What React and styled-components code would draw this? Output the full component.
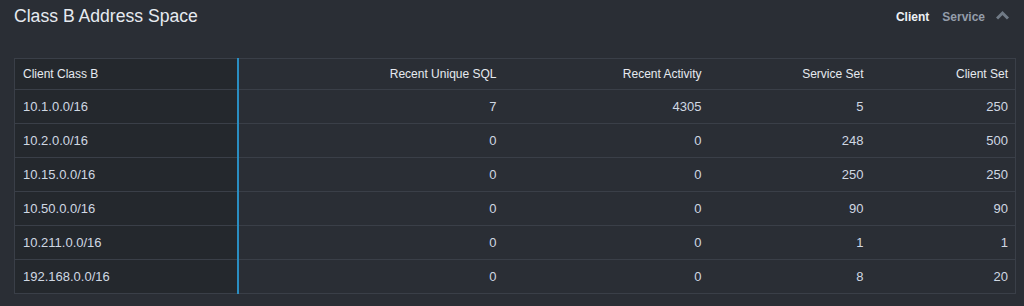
import React from "react";
import styled, { createGlobalStyle } from "styled-components";

const Global = createGlobalStyle`
  html, body { margin: 0; padding: 0; background: #2a2e35; }
  body { font-family: "Liberation Sans", Arial, Helvetica, sans-serif; }
`;

const Panel = styled.div`
  width: 1024px;
  height: 306px;
  box-sizing: border-box;
  padding: 0 9px 0 14px;
  background: #2a2e35;
`;

const Header = styled.div`
  display: flex;
  align-items: center;
  justify-content: space-between;
  height: 34px;
`;

const Title = styled.h2`
  margin: 0;
  font-size: 17.6px;
  font-weight: normal;
  color: #e6eaf0;
  position: relative;
  top: -1px;
`;

const Tabs = styled.div`
  display: flex;
  align-items: center;
  gap: 13px;
  padding-right: 6px;
`;

const Tab = styled.span`
  font-size: 12px;
  font-weight: bold;
  color: ${(p) => (p.$active ? "#eef1f5" : "#949daa")};
`;

const Chevron = styled.svg`
  width: 13px;
  height: 10px;
  margin-left: -2px;
  position: relative;
  top: -2px;
`;

const Table = styled.table`
  margin-top: 24px;
  width: 1001px;
  border-collapse: collapse;
  border: 1px solid #3a3f48;
  table-layout: fixed;
`;

const Th = styled.th`
  height: 30px;
  padding: 0 7px 0 8px;
  font-size: 12px;
  font-weight: normal;
  color: #e6eaf0;
  text-align: ${(p) => (p.$left ? "left" : "right")};
  background: ${(p) => (p.$first ? "#24282d" : "transparent")};
  border-right: ${(p) => (p.$first ? "2px solid #2a8ec2" : "none")};
  border-bottom: 1px solid #3a3f48;
`;

const Td = styled.td`
  height: 33px;
  padding: 0 7px 0 8px;
  font-size: 13px;
  color: #d0d8e3;
  text-align: ${(p) => (p.$left ? "left" : "right")};
  background: ${(p) => (p.$first ? "#24282d" : "transparent")};
  border-right: ${(p) => (p.$first ? "2px solid #2a8ec2" : "none")};
  border-bottom: 1px solid #3a3f48;
`;

const cols = [
  { label: "Client Class B", width: 223 },
  { label: "Recent Unique SQL", width: 266 },
  { label: "Recent Activity", width: 205 },
  { label: "Service Set", width: 162 },
  { label: "Client Set", width: 145 },
];

const rows = [
  ["10.1.0.0/16", 7, 4305, 5, 250],
  ["10.2.0.0/16", 0, 0, 248, 500],
  ["10.15.0.0/16", 0, 0, 250, 250],
  ["10.50.0.0/16", 0, 0, 90, 90],
  ["10.211.0.0/16", 0, 0, 1, 1],
  ["192.168.0.0/16", 0, 0, 8, 20],
];

export default function App() {
  return (
    <>
      <Global />
      <Panel>
        <Header>
          <Title>Class B Address Space</Title>
          <Tabs>
            <Tab $active>Client</Tab>
            <Tab>Service</Tab>
            <Chevron viewBox="0 0 13 10">
              <path d="M1 8.5 L6.5 3 L12 8.5" fill="none" stroke="#707a86" strokeWidth="3" />
            </Chevron>
          </Tabs>
        </Header>
        <Table>
          <colgroup>
            {cols.map((c) => (
              <col key={c.label} style={{ width: c.width }} />
            ))}
          </colgroup>
          <thead>
            <tr>
              {cols.map((c, i) => (
                <Th key={c.label} $left={i === 0} $first={i === 0}>
                  {c.label}
                </Th>
              ))}
            </tr>
          </thead>
          <tbody>
            {rows.map((r) => (
              <tr key={r[0]}>
                {r.map((v, i) => (
                  <Td key={i} $left={i === 0} $first={i === 0}>
                    {v}
                  </Td>
                ))}
              </tr>
            ))}
          </tbody>
        </Table>
      </Panel>
    </>
  );
}
